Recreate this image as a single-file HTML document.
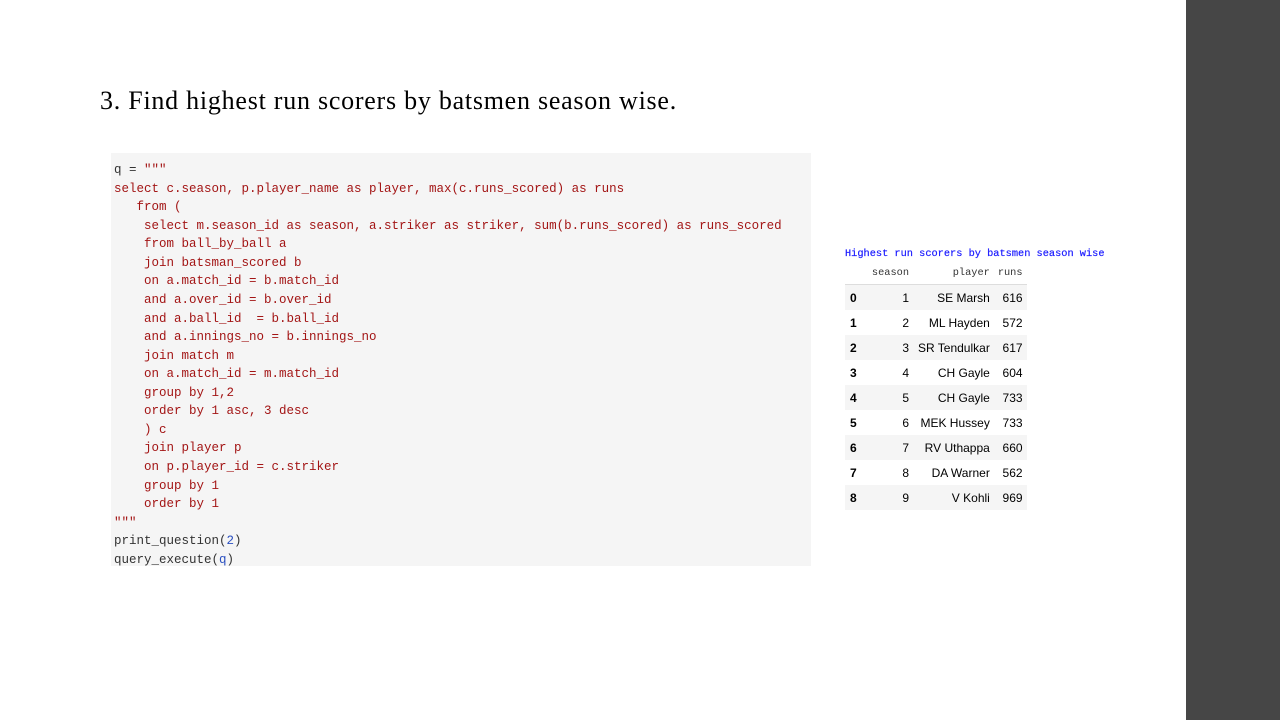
<!DOCTYPE html>
<html><head><meta charset="utf-8"><style>
html,body{margin:0;padding:0;width:1280px;height:720px;overflow:hidden;background:#fff;position:relative}
.bar{position:absolute;left:1186px;top:0;width:94px;height:720px;background:#464646}
h1{position:absolute;left:100px;top:86px;margin:0;font:26px "Liberation Serif",serif;letter-spacing:0.75px;color:#000;font-weight:normal;white-space:nowrap}
.code{position:absolute;left:111px;top:153px;width:700px;height:413px;background:#f5f5f5}
pre{margin:0;position:absolute;left:3px;top:8px;font:12.5px/18.57px "Liberation Mono",monospace;color:#a31515;white-space:pre}
.k{color:#333}.b{color:#2a4fc0}
.title{position:absolute;left:845px;top:248px;font:10.3px "Liberation Mono",monospace;color:#1a1aff;white-space:nowrap;-webkit-text-stroke:0.2px #1a1aff}
table{position:absolute;left:845px;top:262px;border-collapse:collapse;font:12px "Liberation Sans",Arial,sans-serif;color:#000;white-space:nowrap}
th{font:10.3px "Liberation Mono",monospace;color:#333;text-align:right;height:22px;padding:0 4px;border-bottom:1px solid #ddd;font-weight:normal}
td{height:25px;padding:0 4px 0 5px;text-align:right}
td.i{font-weight:bold;text-align:left;width:10px}
tr:nth-child(odd) td{background:#f5f5f5}
</style></head><body>
<div class="bar"></div>
<h1>3. Find highest run scorers by batsmen season wise.</h1>
<div class="code"><pre><span class="k">q = </span>"""
select c.season, p.player_name as player, max(c.runs_scored) as runs
   from (
    select m.season_id as season, a.striker as striker, sum(b.runs_scored) as runs_scored
    from ball_by_ball a
    join batsman_scored b
    on a.match_id = b.match_id
    and a.over_id = b.over_id
    and a.ball_id  = b.ball_id
    and a.innings_no = b.innings_no
    join match m
    on a.match_id = m.match_id
    group by 1,2
    order by 1 asc, 3 desc
    ) c
    join player p
    on p.player_id = c.striker
    group by 1
    order by 1
"""
<span class="k">print_question(</span><span class="b">2</span><span class="k">)</span>
<span class="k">query_execute(</span><span class="b">q</span><span class="k">)</span></pre></div>
<div class="title">Highest run scorers by batsmen season wise</div>
<table>
<thead><tr><th style="width:12px"></th><th style="width:40px">season</th><th>player</th><th>runs</th></tr></thead>
<tbody>
<tr><td class="i">0</td><td>1</td><td>SE Marsh</td><td>616</td></tr>
<tr><td class="i">1</td><td>2</td><td>ML Hayden</td><td>572</td></tr>
<tr><td class="i">2</td><td>3</td><td>SR Tendulkar</td><td>617</td></tr>
<tr><td class="i">3</td><td>4</td><td>CH Gayle</td><td>604</td></tr>
<tr><td class="i">4</td><td>5</td><td>CH Gayle</td><td>733</td></tr>
<tr><td class="i">5</td><td>6</td><td>MEK Hussey</td><td>733</td></tr>
<tr><td class="i">6</td><td>7</td><td>RV Uthappa</td><td>660</td></tr>
<tr><td class="i">7</td><td>8</td><td>DA Warner</td><td>562</td></tr>
<tr><td class="i">8</td><td>9</td><td>V Kohli</td><td>969</td></tr>
</tbody></table>
</body></html>
